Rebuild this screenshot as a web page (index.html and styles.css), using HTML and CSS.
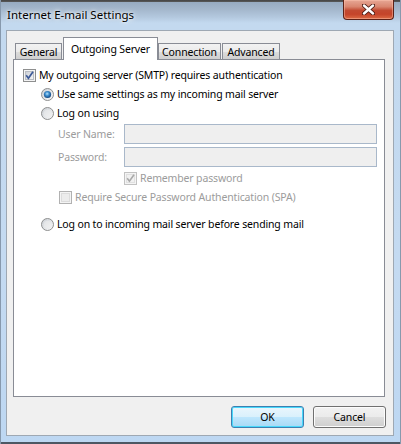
FILE: index.html
```html
<!DOCTYPE html>
<html>
<head>
<meta charset="utf-8">
<link rel="stylesheet" href="styles.css">
</head>
<body>
<div class="window">
  <div class="titlebar">
    <span class="title">Internet E-mail Settings</span>
    <div class="close">
      <svg width="13" height="11" viewBox="0 0 13 11">
        <path d="M2 1.5 L11 9.5 M11 1.5 L2 9.5" stroke="#4a1a12" stroke-width="4.2" stroke-linecap="round"/>
        <path d="M2 1.5 L11 9.5 M11 1.5 L2 9.5" stroke="#ffffff" stroke-width="2.4" stroke-linecap="round"/>
      </svg>
    </div>
  </div>
  <div class="client">
    <div class="tabs">
      <div class="tab w-general">General</div>
      <div class="tab selected w-outgoing">Outgoing Server</div>
      <div class="tab w-connection">Connection</div>
      <div class="tab w-advanced">Advanced</div>
    </div>
    <div class="panel">
      <div class="row row-main">
        <svg class="box" width="13" height="13" viewBox="0 0 13 13">
          <defs><linearGradient id="cbg" x1="0" y1="0" x2="1" y2="1"><stop offset="0" stop-color="#cbcfd5"/><stop offset="1" stop-color="#f6f6f6"/></linearGradient></defs>
          <rect x="0.5" y="0.5" width="12" height="12" fill="#f4f4f4" stroke="#8e8f8f"/>
          <rect x="2.5" y="2.5" width="8" height="8" fill="url(#cbg)" stroke="#b9bdc3"/>
          <path d="M3.2 6.3 L5.4 9.2 L10 2.8" fill="none" stroke="#3d5a98" stroke-width="1.7"/>
        </svg>
        <span class="label">My outgoing server (SMTP) requires authentication</span>
      </div>
      <div class="row row-radio">
        <svg class="box" width="13" height="13" viewBox="0 0 13 13">
          <defs>
            <linearGradient id="rg" x1="0" y1="0" x2="1" y2="1"><stop offset="0" stop-color="#c9ced4"/><stop offset="1" stop-color="#fafafa"/></linearGradient>
            <radialGradient id="dot" cx="0.45" cy="0.4" r="0.6"><stop offset="0" stop-color="#b9e3fb"/><stop offset="0.45" stop-color="#3d8fd0"/><stop offset="1" stop-color="#11427c"/></radialGradient>
          </defs>
          <circle cx="6.5" cy="6.5" r="6" fill="url(#rg)" stroke="#8e8f8f"/>
          <circle cx="6.5" cy="6.5" r="3.6" fill="url(#dot)"/>
        </svg>
        <span class="label">Use same settings as my incoming mail server</span>
      </div>
      <div class="row row-radio">
        <svg class="box" width="13" height="13" viewBox="0 0 13 13">
          <circle cx="6.5" cy="6.5" r="6" fill="url(#rg)" stroke="#8e8f8f"/>
          <circle cx="6.5" cy="6.5" r="3.8" fill="#f0f0f0" opacity="0.5"/>
        </svg>
        <span class="label">Log on using</span>
      </div>
      <div class="row row-field">
        <span class="field-label">User Name:</span>
        <div class="input"></div>
      </div>
      <div class="row row-field row-field2">
        <span class="field-label">Password:</span>
        <div class="input"></div>
      </div>
      <div class="row row-remember">
        <svg class="box" width="13" height="13" viewBox="0 0 13 13">
          <rect x="0.5" y="0.5" width="12" height="12" fill="#f4f4f4" stroke="#c2c2c2"/>
          <rect x="2.5" y="2.5" width="8" height="8" fill="#f1f1f1" stroke="#e0e0e0"/>
          <path d="M3.2 6.3 L5.4 9.2 L10 2.8" fill="none" stroke="#a9a9a9" stroke-width="1.6"/>
        </svg>
        <span class="label disabled">Remember password</span>
      </div>
      <div class="row row-spa">
        <svg class="box" width="13" height="13" viewBox="0 0 13 13">
          <rect x="0.5" y="0.5" width="12" height="12" fill="#f4f4f4" stroke="#b1b1b1"/>
          <rect x="2.5" y="2.5" width="8" height="8" fill="#ececec" stroke="#dcdcdc"/>
        </svg>
        <span class="label disabled">Require Secure Password Authentication (SPA)</span>
      </div>
      <div class="row row-radio row-last">
        <svg class="box" width="13" height="13" viewBox="0 0 13 13">
          <circle cx="6.5" cy="6.5" r="6" fill="url(#rg)" stroke="#8e8f8f"/>
          <circle cx="6.5" cy="6.5" r="3.8" fill="#f0f0f0" opacity="0.5"/>
        </svg>
        <span class="label">Log on to incoming mail server before sending mail</span>
      </div>
    </div>
    <div class="buttons">
      <div class="btn default">OK</div>
      <div class="btn">Cancel</div>
    </div>
  </div>
</div>
</body>
</html>
```

FILE: styles.css
```css
html, body {
  margin: 0;
  padding: 0;
  background: #ffffff;
}

body {
  font-family: "Noto Sans", "Open Sans", sans-serif;
  font-size: 10.5px;
  letter-spacing: -0.15px;
  color: #000000;
}

.window {
  width: 401px;
  height: 444px;
  box-sizing: border-box;
  padding: 0 7px 8px 6px;
  display: flex;
  flex-direction: column;
  background:
    linear-gradient(#444444 0, #5a5a5a 2px, transparent 2px),
    linear-gradient(180deg, #97abc1 2px, #a3b6cb 9px, #b3c8de 17px, #c3d9ef 23px, #c4daf1 60%, #bdd7f2 100%);
  box-shadow: inset 1px 0 0 #8799ad, inset -1px 0 0 #8799ad, inset 0 -2px 0 #4d5763;
}

.titlebar {
  height: 30px;
  flex: none;
  display: flex;
  align-items: flex-start;
}

.title {
  padding: 7px 0 0 1px;
  font-size: 11.5px;
  letter-spacing: 0;
  line-height: 16px;
  color: #000000;
  text-shadow: 0 0 6px #ffffff, 0 0 3px #ffffff;
}

.close {
  margin-left: auto;
  width: 51px;
  height: 20px;
  box-sizing: border-box;
  border: 1px solid #5b2117;
  border-top: none;
  border-radius: 0 0 4px 4px;
  background: linear-gradient(180deg, #e7a795 0%, #d98670 35%, #c24a31 55%, #c4442a 75%, #dc6b45 100%);
  box-shadow: inset 0 0 0 1px rgba(255, 200, 180, 0.45);
  display: flex;
  align-items: center;
  justify-content: center;
}

.client {
  flex: 1;
  border: 1px solid #9ea8b3;
  background: #f0f0f0;
  padding: 6px 8px 0 6px;
  display: flex;
  flex-direction: column;
}

.tabs {
  height: 22px;
  flex: none;
  display: flex;
  align-items: flex-end;
  padding-left: 2px;
  position: relative;
  z-index: 1;
}

.tab {
  height: 16px;
  box-sizing: border-box;
  border: 1px solid #898c95;
  border-bottom: none;
  background: linear-gradient(180deg, #f2f2f2 0%, #ebebeb 50%, #dddddd 51%, #cfcfcf 100%);
  display: flex;
  align-items: center;
  justify-content: center;
  line-height: 14px;
  color: #000000;
}

.tab.selected {
  height: 23px;
  margin-bottom: -1px;
  background: #ffffff;
  padding-bottom: 1px;
}

.w-general { width: 47px; }
.w-outgoing { width: 95px; margin-left: 1px; }
.w-connection { width: 63px; }
.w-advanced { width: 58px; margin-left: 1px; }

.panel {
  height: 338px;
  flex: none;
  box-sizing: border-box;
  border: 1px solid #898c95;
  background: #ffffff;
  padding: 6px 7px 0 0;
  display: flex;
  flex-direction: column;
}

.row {
  height: 19px;
  display: flex;
  align-items: center;
  flex: none;
}

.box {
  flex: none;
  display: block;
}

.label {
  margin-left: 3px;
  white-space: nowrap;
  line-height: 15px;
}

.disabled {
  color: #9c9c9c;
}

.row-main { padding-left: 9px; }
.row-radio { padding-left: 27px; }
.row-last { margin-top: 8px; }

.row-field {
  height: 20px;
  margin-top: 1px;
  padding-left: 44px;
}

.row-field2 { margin-top: 3px; }

.field-label {
  width: 66px;
  flex: none;
  color: #9c9c9c;
  white-space: nowrap;
}

.input {
  flex: 1;
  height: 20px;
  box-sizing: border-box;
  border: 1px solid #a9b8ca;
  background: #efefef;
}

.row-remember {
  margin-top: 2px;
  padding-left: 110px;
}

.row-spa { padding-left: 45px; }

.buttons {
  display: flex;
  justify-content: flex-end;
  gap: 9px;
  margin-top: 9px;
  margin-right: -1px;
}

.btn {
  width: 73px;
  height: 22px;
  box-sizing: border-box;
  border: 1px solid #707070;
  border-radius: 3px;
  background: linear-gradient(180deg, #f2f2f2 0%, #ebebeb 50%, #dddddd 51%, #cfcfcf 100%);
  box-shadow: inset 0 0 0 1px #fcfcfc;
  display: flex;
  align-items: center;
  justify-content: center;
  color: #000000;
}

.btn.default {
  border-color: #3c7fb1;
  box-shadow: inset 0 0 0 1px #48d8fb;
  background: linear-gradient(180deg, #eaf6fd 0%, #d9f0fc 50%, #bee6fd 51%, #a7d9f5 100%);
}
```
